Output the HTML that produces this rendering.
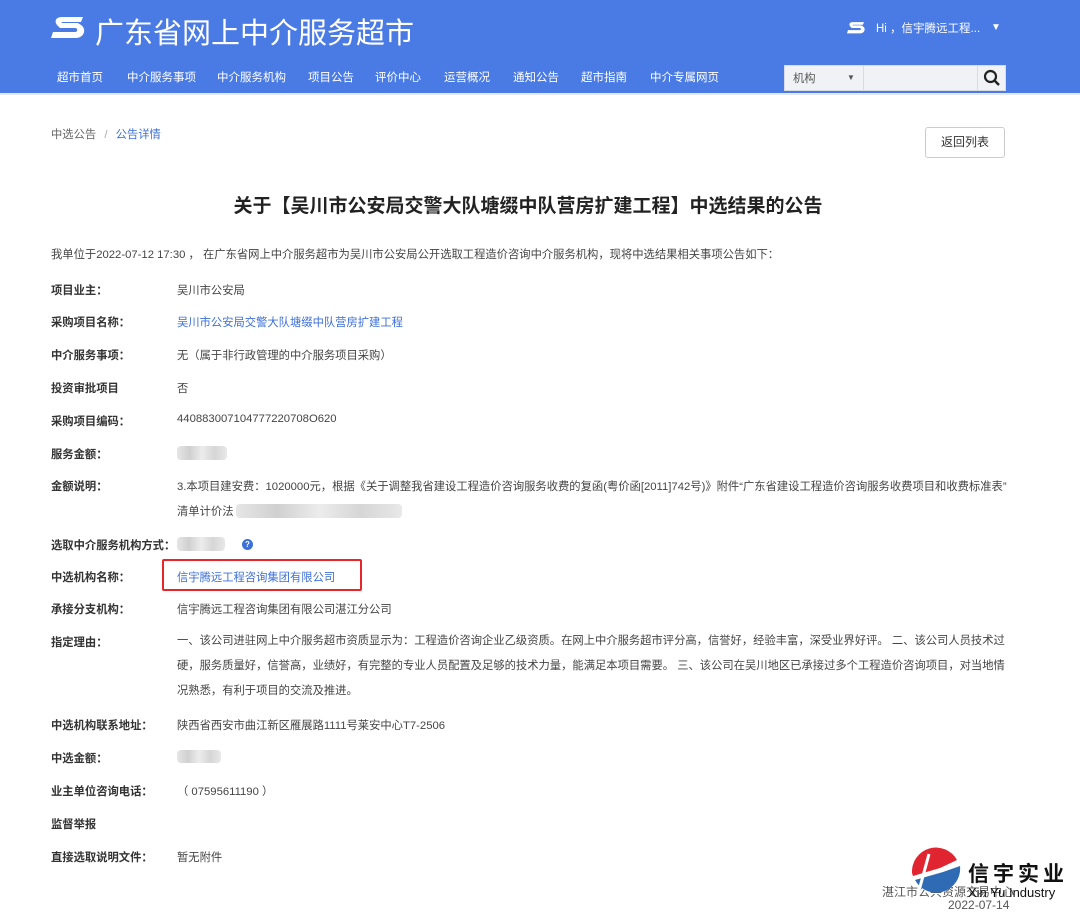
<!DOCTYPE html>
<html><head><meta charset="utf-8"><style>
*{margin:0;padding:0;box-sizing:border-box}
body{width:1080px;height:919px;background:#fff;font-family:"Liberation Sans","Noto Sans CJK SC",sans-serif;color:#333;position:relative;overflow:hidden;font-size:11.3px}
.hdr{position:absolute;left:0;top:0;width:1080px;height:93px;background:#4a7be4}
.a{position:absolute;white-space:nowrap}
.nav{top:69px;color:#fff;font-size:11.5px}
.lab{left:51px;font-weight:bold;color:#333}
.val{left:177px;color:#444}
.link{color:#3d6fd8}
.blur{position:absolute;background:linear-gradient(90deg,#e6e6e6,#d0d0d0,#ececec,#d6d6d6,#e8e8e8);border-radius:4px}
</style></head><body>
<div class="hdr"></div>
<svg class="a" style="left:50px;top:13px" width="36" height="30" viewBox="0 0 36 30"><path d="M33 4H12C6 4 4 8 7 12L10 15H25C28 15 28 19 25 19H3L1 25H26C34 25 37 16 31 12L28 10H13C11 10 11 9 13 9H31Z" fill="#fff"/></svg>
<div class="a" style="left:95px;top:10px;font-size:29px;color:#fff">广东省网上中介服务超市</div>
<svg class="a" style="left:846px;top:20px" width="20" height="16" viewBox="0 0 36 30"><path d="M33 4H12C6 4 4 8 7 12L10 15H25C28 15 28 19 25 19H3L1 25H26C34 25 37 16 31 12L28 10H13C11 10 11 9 13 9H31Z" fill="#fff"/></svg>
<div class="a" style="left:876px;top:20px;color:#fff;font-size:11.5px">Hi ，信宇腾远工程...</div>
<div class="a" style="left:991px;top:22px;color:#fff;font-size:10px">▼</div>
<div class="a nav" style="left:57px">超市首页</div>
<div class="a nav" style="left:127px">中介服务事项</div>
<div class="a nav" style="left:217px">中介服务机构</div>
<div class="a nav" style="left:308px">项目公告</div>
<div class="a nav" style="left:375px">评价中心</div>
<div class="a nav" style="left:444px">运营概况</div>
<div class="a nav" style="left:513px">通知公告</div>
<div class="a nav" style="left:581px">超市指南</div>
<div class="a nav" style="left:650px">中介专属网页</div>
<div class="a" style="left:784px;top:65px;width:222px;height:26px;background:#f0f2f5;border:1px solid #d8dce2"></div>
<div class="a" style="left:863px;top:65px;width:1px;height:26px;background:#d8dce2"></div>
<div class="a" style="left:977px;top:65px;width:1px;height:26px;background:#d8dce2"></div>
<div class="a" style="left:793px;top:70px;color:#555">机构</div>
<div class="a" style="left:847px;top:73px;color:#555;font-size:8px">▼</div>
<svg class="a" style="left:983px;top:69px" width="18" height="18" viewBox="0 0 18 18"><circle cx="7.5" cy="7.5" r="5.5" fill="none" stroke="#222" stroke-width="2.2"/><path d="M11.5 11.5L16 16" stroke="#222" stroke-width="2.5"/></svg>
<div class="a" style="left:0;top:93px;width:1080px;height:2px;background:#e6e8ec"></div>

<div class="a" style="left:51px;top:126px;color:#666">中选公告 <span style="color:#aaa;margin:0 5px">/</span> <span class="link">公告详情</span></div>
<div class="a" style="left:925px;top:127px;width:80px;height:31px;border:1px solid #ccc;border-radius:3px;text-align:center;line-height:29px;color:#333;font-size:12px">返回列表</div>
<div class="a" style="left:-12px;width:1080px;text-align:center;top:191px;font-size:19px;font-weight:bold;color:#222">关于【吴川市公安局交警大队塘缀中队营房扩建工程】中选结果的公告</div>
<div class="a" style="left:51px;top:246px;color:#444">我单位于2022-07-12 17:30 ， 在广东省网上中介服务超市为吴川市公安局公开选取工程造价咨询中介服务机构，现将中选结果相关事项公告如下：</div>

<div class="a lab" style="top:282px">项目业主：</div><div class="a val" style="top:282px">吴川市公安局</div>
<div class="a lab" style="top:314px">采购项目名称：</div><div class="a val link" style="top:314px">吴川市公安局交警大队塘缀中队营房扩建工程</div>
<div class="a lab" style="top:347px">中介服务事项：</div><div class="a val" style="top:347px">无（属于非行政管理的中介服务项目采购）</div>
<div class="a lab" style="top:380px">投资审批项目</div><div class="a val" style="top:380px">否</div>
<div class="a lab" style="top:413px">采购项目编码：</div><div class="a val" style="top:413px">440883007104777220708O620</div>
<div class="a lab" style="top:446px">服务金额：</div><div class="blur" style="left:177px;top:446px;width:50px;height:14px"></div>
<div class="a lab" style="top:478px">金额说明：</div><div class="a val" style="top:478px">3.本项目建安费：1020000元，根据《关于调整我省建设工程造价咨询服务收费的复函(粤价函[2011]742号)》附件“广东省建设工程造价咨询服务收费项目和收费标准表”</div>
<div class="a val" style="top:503px">清单计价法</div><div class="blur" style="left:236px;top:504px;width:166px;height:14px"></div>
<div class="a lab" style="top:537px">选取中介服务机构方式：</div><div class="blur" style="left:177px;top:537px;width:48px;height:14px"></div>
<div class="a" style="left:242px;top:539px;width:11px;height:11px;border-radius:50%;background:#3d6fd8;color:#fff;font-size:8px;text-align:center;line-height:11px;font-weight:bold">?</div>
<div class="a lab" style="top:569px">中选机构名称：</div><div class="a val link" style="top:569px">信宇腾远工程咨询集团有限公司</div>
<div class="a" style="left:162px;top:559px;width:200px;height:32px;border:2px solid #e8262a;border-radius:2px"></div>
<div class="a lab" style="top:601px">承接分支机构：</div><div class="a val" style="top:601px">信宇腾远工程咨询集团有限公司湛江分公司</div>
<div class="a lab" style="top:634px">指定理由：</div>
<div class="a val" style="top:629px;white-space:normal;width:832px;line-height:25px">一、该公司进驻网上中介服务超市资质显示为：工程造价咨询企业乙级资质。在网上中介服务超市评分高，信誉好，经验丰富，深受业界好评。 二、该公司人员技术过硬，服务质量好，信誉高，业绩好，有完整的专业人员配置及足够的技术力量，能满足本项目需要。 三、该公司在吴川地区已承接过多个工程造价咨询项目，对当地情况熟悉，有利于项目的交流及推进。</div>
<div class="a lab" style="top:717px">中选机构联系地址：</div><div class="a val" style="top:717px">陕西省西安市曲江新区雁展路1111号莱安中心T7-2506</div>
<div class="a lab" style="top:750px">中选金额：</div><div class="blur" style="left:177px;top:750px;width:44px;height:13px"></div>
<div class="a lab" style="top:783px">业主单位咨询电话：</div><div class="a val" style="top:783px">（ 07595611190 ）</div>
<div class="a lab" style="top:816px">监督举报</div>
<div class="a lab" style="top:849px">直接选取说明文件：</div><div class="a val" style="top:849px">暂无附件</div>

<div class="a" style="left:882px;top:883px;color:#555;font-size:12px">湛江市公共资源交易中心</div>
<div class="a" style="left:948px;top:898px;color:#555;font-size:12px">2022-07-14</div>
<svg class="a" style="left:907px;top:846px" width="58" height="58" viewBox="0 0 58 58"><path d="M5 27A24 24 0 0 1 50 14L33 22L6 30Z" fill="#e02530"/><path d="M8 34L36 26L53 20A24 24 0 0 1 8 34Z" fill="#2f6bb5"/><path d="M22 8L10 52" stroke="#fff" stroke-width="3"/></svg>
<div class="a" style="left:968px;top:858px;font-size:21px;font-weight:bold;color:#111;letter-spacing:4px">信宇实业</div>
<div class="a" style="left:968px;top:885px;font-size:13px;color:#111">Xin Yu Industry</div>
</body></html>
